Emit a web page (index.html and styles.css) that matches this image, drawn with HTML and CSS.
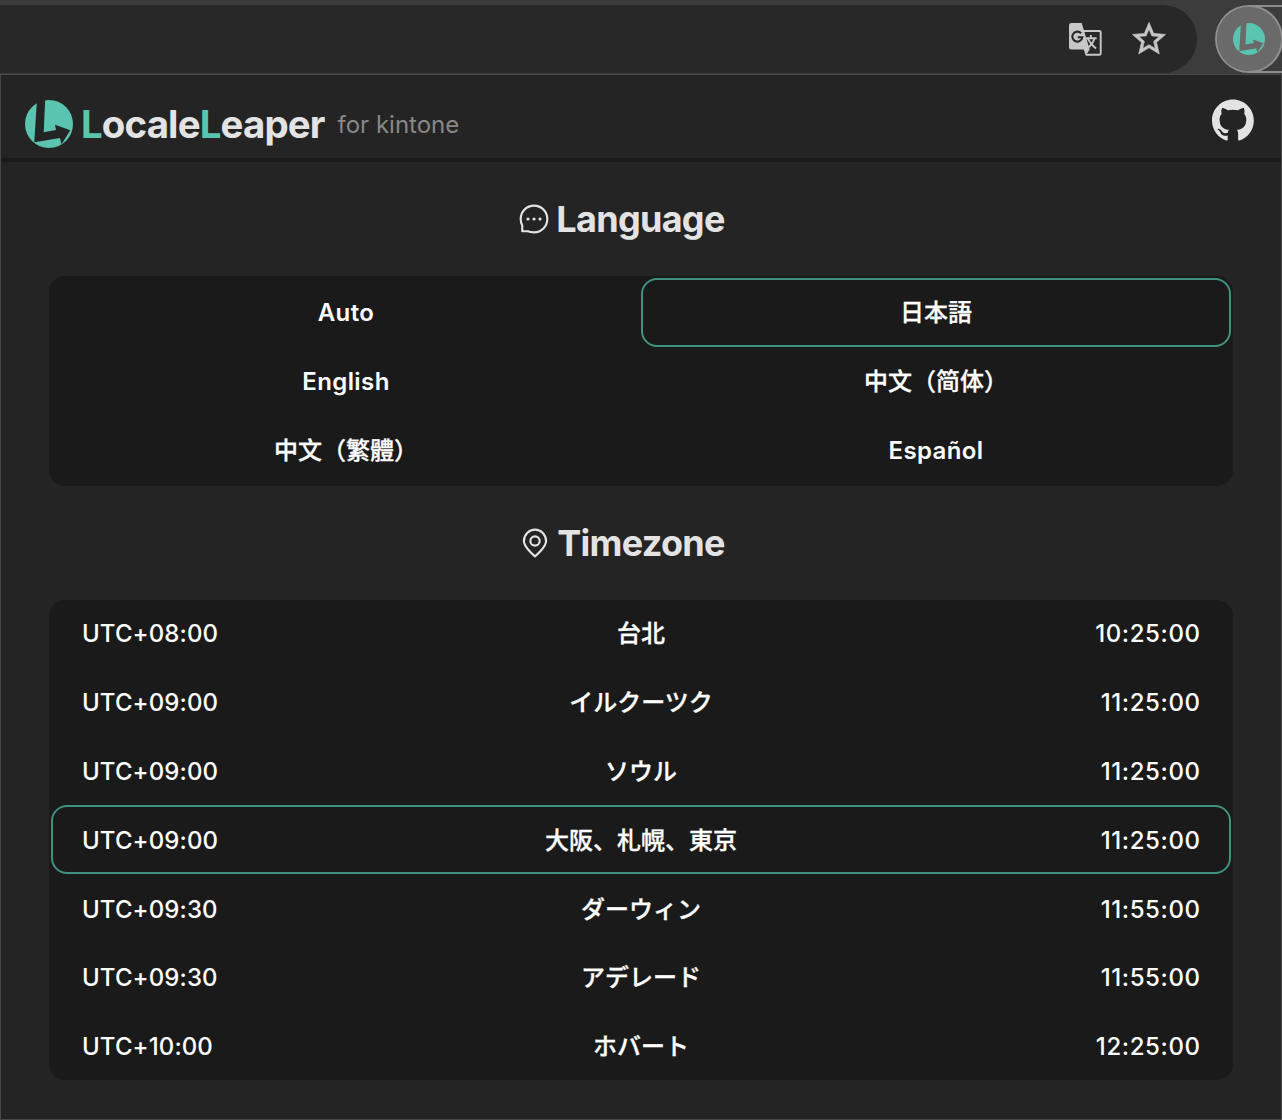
FILE: index.html
```html
<!DOCTYPE html>
<html lang="ja">
<head>
<meta charset="utf-8">
<title>LocaleLeaper for kintone</title>
<link rel="stylesheet" href="styles.css">
</head>
<body>
<svg class="defs" width="0" height="0" aria-hidden="true">
  <symbol id="logo" viewBox="0 0 48 48">
    <circle cx="24" cy="24" r="24"/>
    <path class="logo-gap" d="M12 -1H20.2L18.7 32.2L31 30L30 24.7L45.3 30.3L36.5 44.3L35 38L9.3 42.2Z"/>
  </symbol>
</svg>
<div class="toolbar">
  <div class="omnibox">
    <svg class="translate" viewBox="0 0 33 33">
      <path d="M14 8H30.5Q31.7 8 31.7 9.2V30.5Q31.7 31.7 30.5 31.7H17" fill="none" stroke="currentColor" stroke-width="1.9"/>
      <path d="M2.5 0H12.7L20.7 26.5L16.7 32.6L14.7 26.5H2.5Q0 26.5 0 24V2.5Q0 0 2.5 0Z" fill="currentColor"/>
      <path d="M12.1 10.3A5 5 0 1 0 13.3 14.3H8.8" fill="none" stroke="#282828" stroke-width="2.1"/>
      <path d="M16.8 15.2H27.6M21.8 12V15.2M25.5 15.2Q23.6 21.5 18.2 25.3M18.6 15.4Q21.6 21.5 27 25.6" fill="none" stroke="currentColor" stroke-width="1.9"/>
    </svg>
    <svg class="star" viewBox="0 0 24 24"><path d="M22 9.24l-7.19-.62L12 2 9.19 8.63 2 9.24l5.46 4.73L5.82 21 12 17.27 18.18 21l-1.63-7.03L22 9.24zM12 15.4l-3.76 2.27 1-4.28-3.32-2.88 4.38-.38L12 6.1l1.71 4.04 4.38.38-3.32 2.88 1 4.28L12 15.4z"/></svg>
  </div>
  <div class="extension"><div class="ext-circle"><svg class="ext-logo"><use href="#logo"/></svg></div></div>
</div>
<main class="popup">
  <header class="header">
    <svg class="logo"><use href="#logo"/></svg>
    <h1 class="brand"><b>L</b>ocale<b>L</b>eaper</h1>
    <span class="sub">for kintone</span>
    <svg class="github" viewBox="0 0 98 96"><path fill-rule="evenodd" clip-rule="evenodd" d="M48.854 0C21.839 0 0 22 0 49.217c0 21.756 13.993 40.172 33.405 46.69 2.427.49 3.316-1.059 3.316-2.362 0-1.141-.08-5.052-.08-9.127-13.59 2.934-16.42-5.867-16.42-5.867-2.184-5.704-5.42-7.17-5.42-7.17-4.448-3.015.324-3.015.324-3.015 4.934.326 7.523 5.052 7.523 5.052 4.367 7.496 11.404 5.378 14.235 4.074.404-3.178 1.699-5.378 3.074-6.6-10.839-1.141-22.243-5.378-22.243-24.283 0-5.378 1.94-9.778 5.014-13.2-.485-1.222-2.184-6.275.486-13.038 0 0 4.125-1.304 13.426 5.052a46.97 46.97 0 0 1 12.214-1.63c4.125 0 8.33.571 12.213 1.63 9.302-6.356 13.427-5.052 13.427-5.052 2.67 6.763.97 11.816.485 13.038 3.155 3.422 5.015 7.822 5.015 13.2 0 18.905-11.404 23.06-22.324 24.283 1.78 1.548 3.316 4.481 3.316 9.126 0 6.6-.08 11.897-.08 13.526 0 1.304.89 2.853 3.316 2.364 19.412-6.52 33.405-24.935 33.405-46.691C97.707 22 75.788 0 48.854 0z"/></svg>
  </header>
  <section class="section">
    <h2 class="title language-title">
      <svg viewBox="0 0 24 24"><path d="M12 22A10 10 0 1 0 2 12C2 13.8 2.5 15.5 3.2 17V21.2H7.4C8.8 21.8 10.2 22 12 22Z"/><path class="dots" d="M7.5 12h.01M12 12h.01M16.5 12h.01"/></svg>
      <span>Language</span>
    </h2>
    <div class="panel languages">
      <div class="cell">Auto</div>
      <div class="cell selected"><span class="cjk">日本語</span></div>
      <div class="cell">English</div>
      <div class="cell"><span class="cjk" lang="zh-Hans">中文（简体）</span></div>
      <div class="cell"><span class="cjk" lang="zh-Hant">中文（繁體）</span></div>
      <div class="cell">Español</div>
    </div>
  </section>
  <section class="section">
    <h2 class="title">
      <svg viewBox="0 0 24 24"><path d="M20.3 10.6C20.3 15 12 22 12 22C12 22 3.7 15 3.7 10.6A8.3 8.6 0 0 1 20.3 10.6Z"/><circle cx="12" cy="10.5" r="3.5"/></svg>
      <span>Timezone</span>
    </h2>
    <div class="panel zones">
      <div class="row"><span>UTC+08:00</span><b class="cjk">台北</b><time>10:25:00</time></div>
      <div class="row"><span>UTC+09:00</span><b class="cjk">イルクーツク</b><time>11:25:00</time></div>
      <div class="row"><span>UTC+09:00</span><b class="cjk">ソウル</b><time>11:25:00</time></div>
      <div class="row selected"><span>UTC+09:00</span><b class="cjk">大阪、札幌、東京</b><time>11:25:00</time></div>
      <div class="row"><span>UTC+09:30</span><b class="cjk">ダーウィン</b><time>11:55:00</time></div>
      <div class="row"><span>UTC+09:30</span><b class="cjk">アデレード</b><time>11:55:00</time></div>
      <div class="row"><span>UTC+10:00</span><b class="cjk">ホバート</b><time>12:25:00</time></div>
    </div>
  </section>
</main>
</body>
</html>
```
FILE: styles.css
```css
* { box-sizing: border-box; }
body {
  margin: 0;
  height: 1120px;
  overflow: hidden;
  display: flex;
  flex-direction: column;
  background: #3c3c3c;
  color: #fff;
  font-family: Inter, "Noto Sans CJK JP", sans-serif;
}
.defs { display: none; }
.toolbar {
  height: 74px;
  flex: none;
  display: flex;
  justify-content: space-between;
  padding: 5px 0 1px;
}
.omnibox {
  width: 1197px;
  height: 68px;
  background: #282828;
  border-radius: 0 34px 34px 0;
  display: flex;
  align-items: center;
  justify-content: flex-end;
  gap: 27px;
  padding-right: 28px;
  color: #c7c7c7;
}
.translate { width: 33px; height: 33px; }
.star { width: 40px; height: 40px; fill: #c7c7c7; stroke: #c7c7c7; stroke-width: .35; }
.extension {
  width: 67px;
  height: 68px;
  overflow: hidden;
  border: 2px solid #8e8e8e;
  border-right: 0;
  border-radius: 34px 0 0 34px;
}
.ext-circle {
  width: 68px;
  height: 68px;
  margin: -2px;
  border: 2px solid #8e8e8e;
  border-radius: 50%;
  background: #6a6a6a;
  display: flex;
  align-items: center;
  justify-content: center;
}
.ext-logo { width: 32px; height: 32px; fill: #5ac4b0; --gap: #6a6a6a; }
.logo-gap { fill: var(--gap); }
.popup {
  flex: 1;
  border: 1px solid #484848;
  background: #242424;
}
.header {
  height: 87px;
  border-bottom: 4px solid #1a1a1a;
  display: flex;
  align-items: center;
  padding: 0 27px 0 24px;
}
.logo { width: 48px; height: 48px; margin-top: 15px; fill: #5ac4b0; --gap: #242424; }
.brand {
  margin: 14px 0 0 8px;
  font-size: 38.4px;
  line-height: 48px;
  font-weight: 700;
  letter-spacing: -.85px;
  color: #e3e3e3;
}
.brand b { color: #5ac4b0; font-weight: 700; }
.sub { margin: 15px 0 0 13px; font-size: 24px; color: #888; }
.github { width: 42px; height: 42px; margin: 7px 0 0 auto; fill: #e3e3e3; }
.section { padding: 0 48px; }
.title {
  height: 114px;
  margin: 0;
  display: flex;
  align-items: center;
  justify-content: center;
  gap: 6px;
  padding-right: 38px;
  color: #e3e3e3;
  font-size: 36px;
  font-weight: 700;
  letter-spacing: -.7px;
}
.language-title { padding-right: 39px; }
.title svg { width: 32px; height: 32px; fill: none; stroke: #e3e3e3; stroke-width: 1.6; stroke-linejoin: round; }
.title .dots { stroke-width: 2.4; stroke-linecap: round; }
.panel { background: #1a1a1a; border-radius: 16px; padding: 2px; font-size: 24px; overflow: hidden; }
.languages {
  height: 210px;
  display: grid;
  grid-template-columns: 1fr 1fr;
  grid-auto-rows: 68.8px;
}
.cell {
  display: flex;
  align-items: center;
  justify-content: center;
  padding-top: .6px;
  font-weight: 600;
  letter-spacing: .4px;
  border: 2px solid transparent;
  border-radius: 16px;
}
.cjk, .row .cjk {
  font-family: "Noto Sans CJK JP", sans-serif;
  font-weight: 500;
  letter-spacing: 0;
  line-height: 32px;
  padding-bottom: 3px;
  -webkit-text-stroke: .3px currentColor;
}
.cjk:lang(zh-Hans) { font-family: "Noto Sans CJK SC", sans-serif; }
.cjk:lang(zh-Hant) { font-family: "Noto Sans CJK TC", sans-serif; }
.zones { height: 480px; padding-top: 0; }
.row {
  height: 68.8px;
  display: grid;
  grid-template-columns: 1fr 1fr 1fr;
  align-items: center;
  padding: 1px 29px 0;
  border: 2px solid transparent;
  border-radius: 16px;
  font-weight: 450;
  letter-spacing: .1px;
}
.row:first-child { margin-top: -1px; }
.row b { text-align: center; }
.row time { text-align: right; letter-spacing: .6px; margin-right: -.6px; }
.cell.selected, .row.selected { border-color: #3f9181; }
```
